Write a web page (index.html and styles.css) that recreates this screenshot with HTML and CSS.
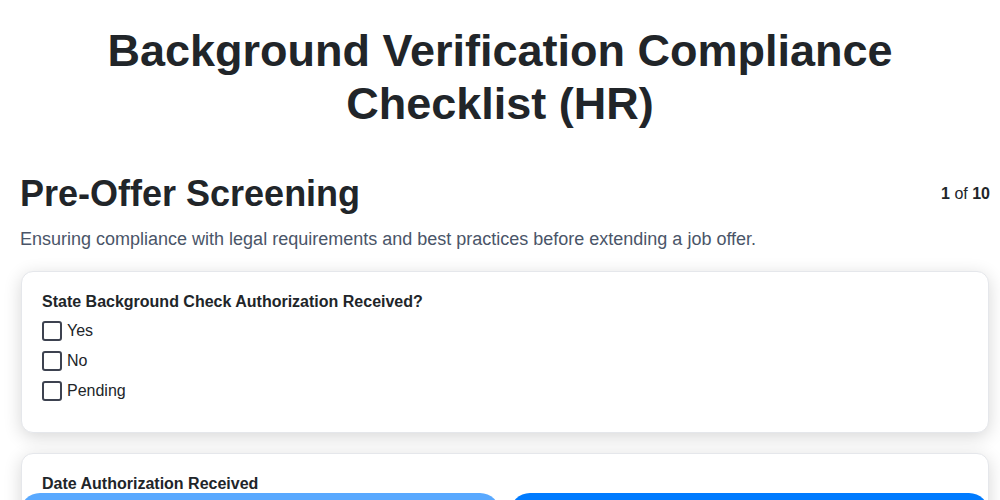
FILE: index.html
```html
<!DOCTYPE html>
<html lang="en">
<head>
<meta charset="utf-8">
<title>Background Verification Compliance Checklist (HR)</title>
<link rel="stylesheet" href="styles.css">
</head>
<body>
<header class="top">
  <h1 class="title">Background Verification Compliance Checklist (HR)</h1>
</header>
<main class="page">
  <div class="section-head">
    <h2 class="section-title">Pre-Offer Screening</h2>
    <div class="counter"><b>1</b> of <b>10</b></div>
  </div>
  <p class="section-desc">Ensuring compliance with legal requirements and best practices before extending a job offer.</p>

  <div class="card">
    <div class="q-label">State Background Check Authorization Received?</div>
    <label class="option"><span class="box"></span><span>Yes</span></label>
    <label class="option"><span class="box"></span><span>No</span></label>
    <label class="option"><span class="box"></span><span>Pending</span></label>
  </div>

  <div class="card">
    <div class="q-label">Date Authorization Received</div>
    <div class="field"></div>
  </div>
</main>
<nav class="nav">
  <button class="btn btn-prev" type="button">Previous</button>
  <button class="btn btn-next" type="button">Next</button>
</nav>
</body>
</html>
```
FILE: styles.css
```css
html, body {
  margin: 0;
  padding: 0;
  background: #ffffff;
}
body {
  font-family: "Liberation Sans", Arial, sans-serif;
  color: #212529;
}
.top {
  padding: 24px 20px 0;
}
.page {
  padding: 0 10px 0 20px;
}
.title {
  margin: 0 auto;
  max-width: 840px;
  font-size: 45px;
  line-height: 53px;
  font-weight: 700;
  text-align: center;
  color: #212529;
}
.section-head {
  display: flex;
  justify-content: space-between;
  align-items: center;
  margin-top: 41px;
}
.section-title {
  margin: 0;
  font-size: 36px;
  line-height: 46px;
  font-weight: 700;
  color: #212529;
}
.counter {
  font-size: 16px;
  color: #212529;
}
.section-desc {
  margin: 10px 0 20px;
  font-size: 18px;
  line-height: 24px;
  color: #4a5568;
}
.card {
  background: #fff;
  border: 1px solid #e5e7eb;
  border-radius: 12px;
  box-shadow: 0 4px 18px rgba(0, 0, 0, 0.16);
  padding: 21px 20px 26px;
  margin: 0 1px 20px;
}
.q-label {
  font-size: 16px;
  line-height: 18px;
  font-weight: 700;
  color: #212529;
  margin-bottom: 5px;
}
.option {
  display: flex;
  align-items: center;
  gap: 5px;
  height: 30px;
  font-size: 16px;
  color: #212529;
}
.box {
  width: 16px;
  height: 16px;
  border: 2px solid #3d4250;
  border-radius: 3px;
  flex: none;
}
.field {
  height: 40px;
}
.nav {
  position: absolute;
  top: 493px;
  left: 20px;
  right: 11px;
  display: flex;
  gap: 10px;
}
.btn {
  flex: 1;
  height: 44px;
  border: none;
  border-radius: 20px;
  background: #007bff;
  color: #fff;
  font-family: inherit;
  font-size: 16px;
}
.btn-prev {
  opacity: 0.65;
}
```
